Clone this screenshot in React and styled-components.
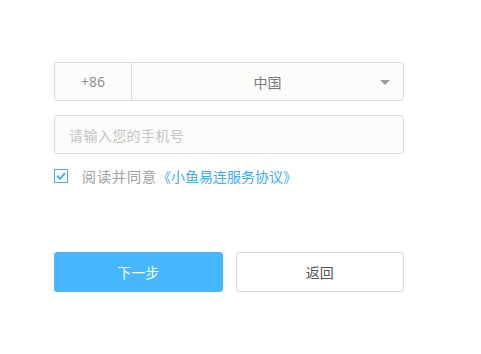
import React, { useState } from 'react';
import styled, { createGlobalStyle } from 'styled-components';

const Global = createGlobalStyle`
  html, body {
    margin: 0;
    padding: 0;
    background: #ffffff;
  }
  body {
    font-family: "Open Sans", "Noto Sans CJK SC", sans-serif;
  }
`;

const Page = styled.div`
  width: 481px;
  height: 354px;
  box-sizing: border-box;
  padding: 62px 0 0 54px;
`;

const Form = styled.div`
  width: 350px;
  display: flex;
  flex-direction: column;
`;

const Field = styled.div`
  height: 39px;
  box-sizing: border-box;
  border: 1px solid #dcdcdc;
  border-radius: 3px;
  background: #fcfcfa;
  display: flex;
  align-items: stretch;
  margin-bottom: ${(p) => p.$gap || 0}px;
`;

const Code = styled.div`
  width: 76px;
  border-right: 1px solid #dcdcdc;
  display: flex;
  align-items: center;
  justify-content: center;
  font-size: 14px;
  color: #8a8a8a;
`;

const Country = styled.div`
  flex: 1;
  position: relative;
  display: flex;
  align-items: center;
  justify-content: center;
  font-size: 14px;
  color: #7a7a7a;
`;

const Caret = styled.span`
  position: absolute;
  right: 13px;
  top: 50%;
  margin-top: -2px;
  width: 0;
  height: 0;
  border-left: 5px solid transparent;
  border-right: 5px solid transparent;
  border-top: 5px solid #9a9a9a;
`;

const Input = styled.input`
  flex: 1;
  border: none;
  outline: none;
  background: transparent;
  padding: 0 14px;
  font-family: "Noto Sans CJK SC", sans-serif;
  font-size: 14px;
  letter-spacing: 0.4px;
  color: #555;
  &::placeholder {
    color: #c4c4c4;
  }
`;

const Agree = styled.label`
  display: flex;
  align-items: center;
  gap: 14px;
  height: 14px;
  margin-top: 15px;
  font-family: "Noto Sans CJK SC", sans-serif;
  font-size: 14px;
  line-height: 14px;
  color: #a0a0a0;
  cursor: pointer;
`;

const Box = styled.span`
  width: 14px;
  height: 14px;
  box-sizing: border-box;
  border: 1px solid #45acf0;
  display: flex;
  align-items: center;
  justify-content: center;
`;

const Plain = styled.span`
  letter-spacing: 1px;
`;

const Link = styled.a`
  color: #3fa9f2;
  text-decoration: none;
`;

const Buttons = styled.div`
  display: flex;
  gap: 13px;
  margin-top: 69px;
`;

const Button = styled.button`
  flex: 1;
  height: 40px;
  border-radius: 3px;
  font-family: "Noto Sans CJK SC", sans-serif;
  font-size: 14px;
  cursor: pointer;
  border: 1px solid ${(p) => (p.$primary ? '#46b6fe' : '#d8d8d8')};
  background: ${(p) => (p.$primary ? '#46b6fe' : '#ffffff')};
  color: ${(p) => (p.$primary ? '#ffffff' : '#555555')};
`;

export default function App() {
  const [checked, setChecked] = useState(true);
  return (
    <>
      <Global />
      <Page>
        <Form>
          <Field $gap={14}>
            <Code>+86</Code>
            <Country>
              中国
              <Caret />
            </Country>
          </Field>
          <Field>
            <Input placeholder="请输入您的手机号" />
          </Field>
          <Agree onClick={() => setChecked(!checked)}>
            <Box>
              {checked && (
                <svg width="10" height="8" viewBox="0 0 10 8">
                  <path d="M1 3.8 L4 6.8 L9 1.2" fill="none" stroke="#45acf0" strokeWidth="2" />
                </svg>
              )}
            </Box>
            <span>
              <Plain>阅读并同意</Plain>
              <Link href="#" onClick={(e) => e.preventDefault()}>
                《小鱼易连服务协议》
              </Link>
            </span>
          </Agree>
          <Buttons>
            <Button $primary>下一步</Button>
            <Button>返回</Button>
          </Buttons>
        </Form>
      </Page>
    </>
  );
}
